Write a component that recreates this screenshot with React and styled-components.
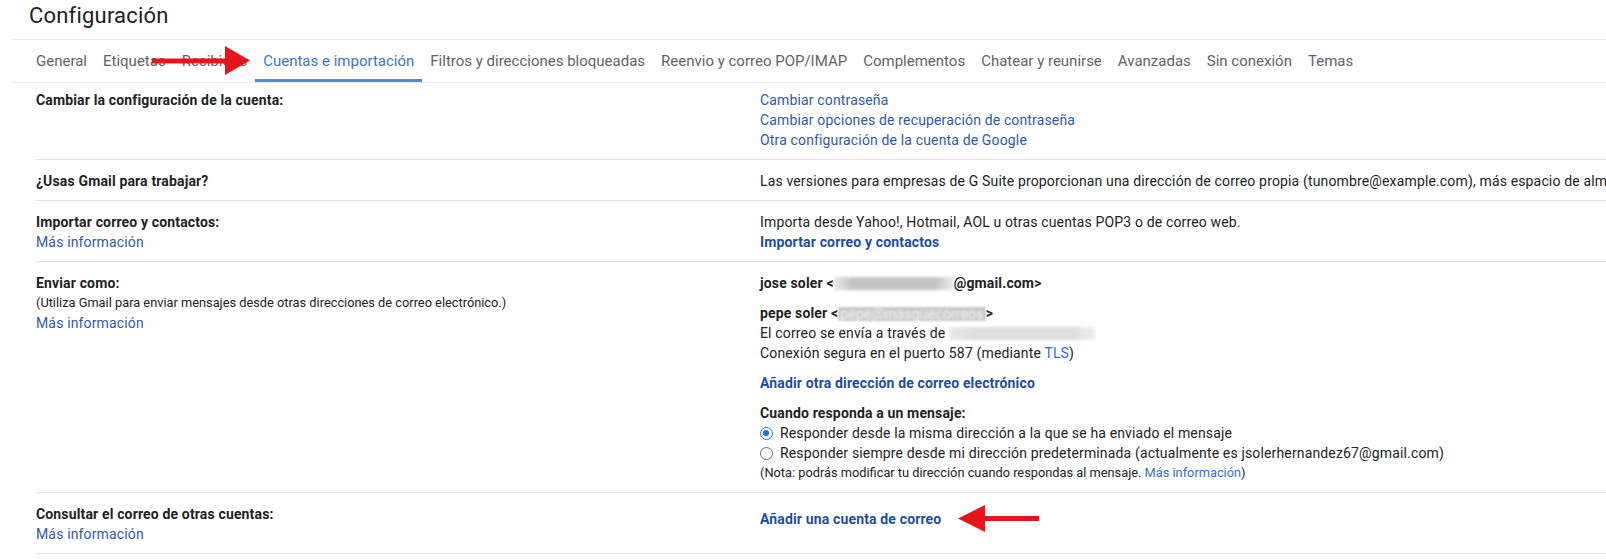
import React from "react";
import styled, { createGlobalStyle } from "styled-components";

const GlobalStyle = createGlobalStyle`
  html, body {
    margin: 0;
    padding: 0;
    background: #fff;
  }
`;

const Page = styled.div`
  position: relative;
  width: 1606px;
  height: 559px;
  overflow: hidden;
  background: #fff;
  font-family: Roboto, "Liberation Sans", Arial, sans-serif;
  color: #222;
`;

const Title = styled.h1`
  margin: 0;
  padding-left: 29px;
  height: 39px;
  line-height: 32px;
  font-size: 22px;
  font-weight: 400;
  letter-spacing: 0.2px;
  color: #202124;
`;

const TabBar = styled.div`
  position: relative;
  display: flex;
  height: 42px;
  margin-left: 12px;
  padding-left: 16px;
  border-top: 1px solid #e8eaed;
  border-bottom: 1px solid #e8eaed;
`;

const Tab = styled.div`
  display: flex;
  align-items: center;
  padding: 3px 8px 0;
  font-size: 15px;
  color: ${(p) => (p.$active ? "#3b74d0" : "#5f6368")};
  border-bottom: 3px solid ${(p) => (p.$active ? "#5b86d6" : "transparent")};
  white-space: nowrap;
`;

const Marker = styled.svg`
  position: absolute;
  left: 140px;
  top: 6px;
`;

const Table = styled.div`
  margin-left: 36px;
`;

const Row = styled.div`
  display: grid;
  grid-template-columns: 724px 1fr;
  padding: ${(p) => (p.$first ? "7px" : "11px")} 0 9px;
  border-bottom: 1px solid #e4e4e4;
  font-size: 14px;
  line-height: 20px;
  letter-spacing: 0.15px;
  white-space: nowrap;
`;

const Cell = styled.div`
  display: flex;
  flex-direction: column;
  align-items: flex-start;
`;

const Label = styled.div`
  font-weight: 700;
  color: #222;
`;

const Small = styled.div`
  font-size: 12.8px;
  letter-spacing: 0;
  color: #222;
`;

const Text = styled.div`
  margin-bottom: ${(p) => p.$gap || 0}px;
`;

const Link = styled.a`
  color: ${(p) => (p.$bold ? "#1c4e9e" : "#2f5ba8")};
  font-weight: ${(p) => (p.$bold ? 700 : 400)};
  text-decoration: none;
  cursor: pointer;
`;

const InlineLink = styled.span`
  color: #2f6fd0;
`;

const Blur = styled.span`
  display: inline-block;
  width: ${(p) => p.$w}px;
  height: 13px;
  vertical-align: -2px;
  background: linear-gradient(
    90deg,
    rgba(200, 200, 200, 0.4),
    ${(p) => p.$tone} 15%,
    ${(p) => p.$tone} 85%,
    rgba(200, 200, 200, 0.3)
  );
  filter: blur(1.5px);
`;

const BlurText = styled.span`
  display: inline-block;
  padding: 0 2px;
  color: #f4f4f4;
  background: #c9c9c9;
  filter: blur(1.3px);
  font-weight: 400;
  height: 14px;
  line-height: 14px;
  vertical-align: -1px;
`;

const RadioLine = styled.label`
  display: flex;
  align-items: center;
  color: #222;
`;

const Radio = styled.span`
  position: relative;
  box-sizing: border-box;
  width: 13px;
  height: 13px;
  margin-right: 7px;
  border-radius: 50%;
  border: 1.5px solid ${(p) => (p.$checked ? "#1a73e8" : "#6b6b6b")};
  background: #fff;

  &::after {
    content: "";
    display: ${(p) => (p.$checked ? "block" : "none")};
    position: absolute;
    left: 2px;
    top: 2px;
    width: 6px;
    height: 6px;
    border-radius: 50%;
    background: #1a73e8;
  }
`;

const LinkLine = styled.div`
  display: flex;
  align-items: center;
`;

const ArrowLeft = styled.svg`
  margin-left: 17px;
`;

const tabs = [
  "General",
  "Etiquetas",
  "Recibidos",
  "Cuentas e importación",
  "Filtros y direcciones bloqueadas",
  "Reenvio y correo POP/IMAP",
  "Complementos",
  "Chatear y reunirse",
  "Avanzadas",
  "Sin conexión",
  "Temas",
];

const App = () => {
  return (
    <Page>
      <GlobalStyle />
      <Title>Configuración</Title>
      <TabBar>
        {tabs.map((t) => (
          <Tab key={t} $active={t === "Cuentas e importación"}>
            {t}
          </Tab>
        ))}
        <Marker width="100" height="30" viewBox="0 0 100 30">
          <rect x="0" y="12.5" width="76" height="5" fill="#e8141b" />
          <polygon points="73,0 98,14.5 73,29" fill="#e8141b" />
        </Marker>
      </TabBar>

      <Table>
        <Row $first>
          <Cell>
            <Label>Cambiar la configuración de la cuenta:</Label>
          </Cell>
          <Cell>
            <Link>Cambiar contraseña</Link>
            <Link>Cambiar opciones de recuperación de contraseña</Link>
            <Link>Otra configuración de la cuenta de Google</Link>
          </Cell>
        </Row>

        <Row>
          <Cell>
            <Label>¿Usas Gmail para trabajar?</Label>
          </Cell>
          <Cell>
            <Text>
              Las versiones para empresas de G Suite proporcionan una dirección
              de correo propia (tunombre@example.com), más espacio de
              almacenamiento y herramientas de administración.
            </Text>
          </Cell>
        </Row>

        <Row>
          <Cell>
            <Label>Importar correo y contactos:</Label>
            <Link>Más información</Link>
          </Cell>
          <Cell>
            <Text>
              Importa desde Yahoo!, Hotmail, AOL u otras cuentas POP3 o de
              correo web.
            </Text>
            <Link $bold>Importar correo y contactos</Link>
          </Cell>
        </Row>

        <Row>
          <Cell>
            <Label>Enviar como:</Label>
            <Small>
              (Utiliza Gmail para enviar mensajes desde otras direcciones de
              correo electrónico.)
            </Small>
            <Link>Más información</Link>
          </Cell>
          <Cell>
            <Label as="div" style={{ marginBottom: 10 }}>
              jose soler &lt;
              <Blur $w={120} $tone="#c4c4c4" />
              @gmail.com&gt;
            </Label>
            <Label>
              pepe soler &lt;<BlurText>pepe@masquecorreos</BlurText>&gt;
            </Label>
            <Text>
              El correo se envía a través de{" "}
              <Blur $w={146} $tone="#dedede" />
            </Text>
            <Text $gap={10}>
              Conexión segura en el puerto 587 (mediante{" "}
              <InlineLink>TLS</InlineLink>)
            </Text>
            <Text $gap={10}>
              <Link $bold>Añadir otra dirección de correo electrónico</Link>
            </Text>
            <Label>Cuando responda a un mensaje:</Label>
            <RadioLine>
              <Radio $checked />
              Responder desde la misma dirección a la que se ha enviado el
              mensaje
            </RadioLine>
            <RadioLine>
              <Radio />
              Responder siempre desde mi dirección predeterminada (actualmente
              es jsolerhernandez67@gmail.com)
            </RadioLine>
            <Small>
              (Nota: podrás modificar tu dirección cuando respondas al mensaje.{" "}
              <InlineLink>Más información</InlineLink>)
            </Small>
          </Cell>
        </Row>

        <Row>
          <Cell>
            <Label>Consultar el correo de otras cuentas:</Label>
            <Link>Más información</Link>
          </Cell>
          <Cell>
            <LinkLine>
              <Link $bold>Añadir una cuenta de correo</Link>
              <ArrowLeft width="82" height="30" viewBox="0 0 82 30">
                <polygon points="0,14.5 27,1 27,28" fill="#e8141b" />
                <rect x="25" y="12" width="56" height="5" fill="#e8141b" />
              </ArrowLeft>
            </LinkLine>
          </Cell>
        </Row>
      </Table>
    </Page>
  );
};

export default App;
